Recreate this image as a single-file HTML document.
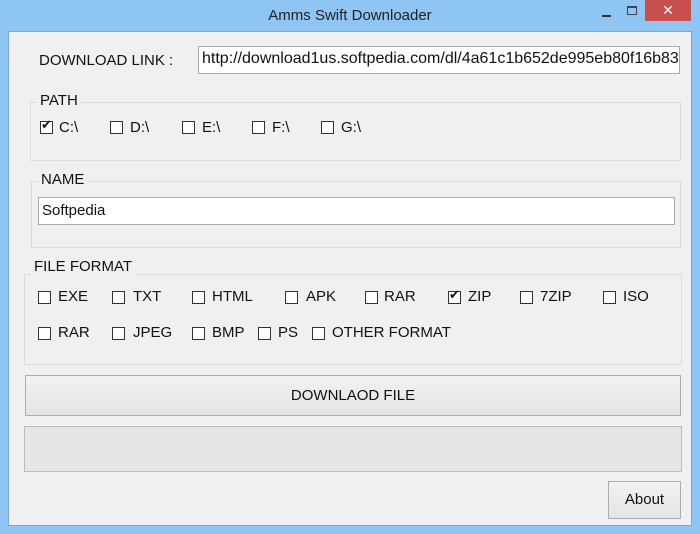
<!DOCTYPE html>
<html><head><style>
*{margin:0;padding:0;box-sizing:border-box}
body{width:700px;height:534px;background:#8ec5f2;font-family:"Liberation Sans",sans-serif;position:relative;overflow:hidden;color:#111}
.a{position:absolute}
.client{left:8px;top:31px;width:684px;height:495px;background:#f0f0f0;border:1px solid #7aa9d6}
.t{font-size:15px;white-space:nowrap}
.cb{width:13px;height:13px;border:1px solid #333;background:#fff}
.grp{border:1px solid #dcdcdc}
.lg{background:#f0f0f0;padding:0 3px;font-size:15px}
.inp{background:#fff;border:1px solid #aaa;font-size:15px;padding:4px 3px;white-space:nowrap;overflow:hidden}
.btn{border:1px solid #adadad;background:linear-gradient(#f2f2f2,#e4e4e4);font-size:15px;text-align:center}
</style></head><body>
<div class="a t" style="left:0;width:700px;top:7px;text-align:center;font-size:15px;color:#222">Amms Swift Downloader</div>
<div class="a" style="left:602px;top:15px;width:9px;height:2px;background:#333"></div>
<div class="a" style="left:627px;top:6px;width:10px;height:9px;border:1px solid #444;border-top-width:2px"></div>
<div class="a" style="left:645px;top:0;width:46px;height:21px;background:#c7504f;color:#fff;text-align:center;font-size:14px;line-height:21px">✕</div>
<div class="a client"></div>
<div class="a t" style="left:39px;top:52px">DOWNLOAD LINK :</div>
<div class="a inp" style="left:198px;top:46px;width:482px;height:28px;font-size:16px;padding:3px 3px">http://download1us.softpedia.com/dl/4a61c1b652de995eb80f16b83</div>

<div class="a grp" style="left:30px;top:102px;width:651px;height:59px"></div>
<div class="a lg" style="left:37px;top:92px">PATH</div>
<div class="a cb" style="left:40px;top:121px"></div><div class="a" style="left:41px;top:117px;font-size:13px">✔</div><div class="a t" style="left:59px;top:119px">C:\</div>
<div class="a cb" style="left:110px;top:121px"></div><div class="a t" style="left:130px;top:119px">D:\</div>
<div class="a cb" style="left:182px;top:121px"></div><div class="a t" style="left:202px;top:119px">E:\</div>
<div class="a cb" style="left:252px;top:121px"></div><div class="a t" style="left:272px;top:119px">F:\</div>
<div class="a cb" style="left:321px;top:121px"></div><div class="a t" style="left:341px;top:119px">G:\</div>

<div class="a grp" style="left:31px;top:181px;width:650px;height:67px"></div>
<div class="a lg" style="left:38px;top:171px">NAME</div>
<div class="a inp" style="left:38px;top:197px;width:637px;height:28px">Softpedia</div>

<div class="a grp" style="left:24px;top:274px;width:658px;height:91px"></div>
<div class="a lg" style="left:31px;top:258px">FILE FORMAT</div>
<div class="a cb" style="left:38px;top:291px"></div><div class="a t" style="left:58px;top:288px">EXE</div>
<div class="a cb" style="left:112px;top:291px"></div><div class="a t" style="left:133px;top:288px">TXT</div>
<div class="a cb" style="left:192px;top:291px"></div><div class="a t" style="left:212px;top:288px">HTML</div>
<div class="a cb" style="left:285px;top:291px"></div><div class="a t" style="left:306px;top:288px">APK</div>
<div class="a cb" style="left:365px;top:291px"></div><div class="a t" style="left:384px;top:288px">RAR</div>
<div class="a cb" style="left:448px;top:291px"></div><div class="a" style="left:449px;top:287px;font-size:13px">✔</div><div class="a t" style="left:468px;top:288px">ZIP</div>
<div class="a cb" style="left:520px;top:291px"></div><div class="a t" style="left:540px;top:288px">7ZIP</div>
<div class="a cb" style="left:603px;top:291px"></div><div class="a t" style="left:623px;top:288px">ISO</div>
<div class="a cb" style="left:38px;top:327px"></div><div class="a t" style="left:58px;top:324px">RAR</div>
<div class="a cb" style="left:112px;top:327px"></div><div class="a t" style="left:133px;top:324px">JPEG</div>
<div class="a cb" style="left:192px;top:327px"></div><div class="a t" style="left:212px;top:324px">BMP</div>
<div class="a cb" style="left:258px;top:327px"></div><div class="a t" style="left:278px;top:324px">PS</div>
<div class="a cb" style="left:312px;top:327px"></div><div class="a t" style="left:332px;top:324px">OTHER FORMAT</div>

<div class="a btn" style="left:25px;top:375px;width:656px;height:41px;line-height:39px">DOWNLAOD FILE</div>
<div class="a" style="left:24px;top:426px;width:658px;height:46px;border:1px solid #bcbcbc;background:#e6e6e6"></div>
<div class="a btn" style="left:608px;top:481px;width:73px;height:38px;line-height:36px;font-size:15px">About</div>
</body></html>
